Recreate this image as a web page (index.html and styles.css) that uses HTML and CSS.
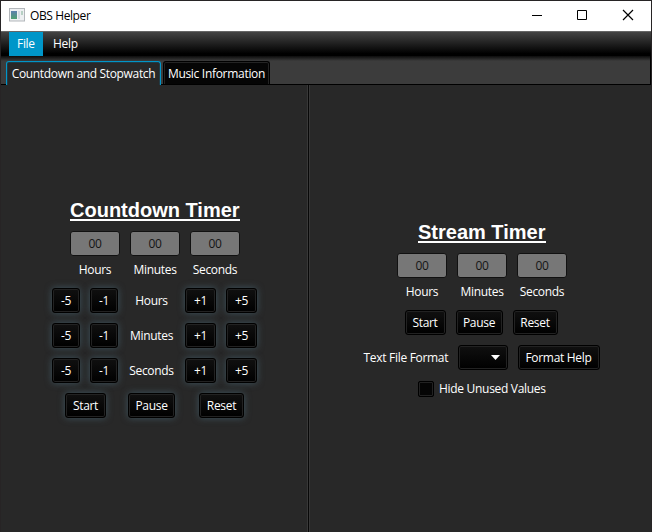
FILE: index.html
```html
<!DOCTYPE html>
<html lang="en">
<head>
<meta charset="utf-8">
<title>OBS Helper</title>
<link rel="stylesheet" href="styles.css">
</head>
<body>
<div class="window">
  <header class="titlebar">
    <svg class="app-icon" width="16" height="14" viewBox="0 0 16 14">
      <defs><linearGradient id="pane" x1="0" y1="0" x2="0" y2="1"><stop offset="0" stop-color="#5d7fae"/><stop offset="1" stop-color="#4fa070"/></linearGradient></defs>
      <rect x=".5" y=".5" width="15" height="12.5" fill="#eef0f2" stroke="#b3b7bb"/>
      <rect x="2" y="3" width="6" height="8" fill="url(#pane)"/>
      <rect x="9" y="3" width="2" height="8" fill="#d4dbe2"/>
      <rect x="12" y="3" width="2" height="4" fill="#b7d0c4"/>
    </svg>
    <h1 class="caption">OBS Helper</h1>
    <svg class="controls" width="138" height="30" viewBox="0 0 138 30" fill="none" stroke="#000">
      <path d="M19 14.5H29M64.5 9.5h9v9h-9z"/><path stroke-width="1.2" d="M110 9l10 10M120 9l-10 10"/>
    </svg>
  </header>
  <nav class="menubar"><span class="menu active">File</span><span class="menu">Help</span></nav>
  <div class="tabs"><span class="tab selected">Countdown and Stopwatch</span><span class="tab music">Music Information</span></div>
  <main class="split">
    <section class="pane countdown">
      <h2>Countdown Timer</h2>
      <div class="fields"><span class="field">00</span><span class="field">00</span><span class="field">00</span></div>
      <div class="labels"><span>Hours</span><span>Minutes</span><span>Seconds</span></div>
      <div class="adjust"><button>-5</button><button>-1</button><span>Hours</span><button>+1</button><button>+5</button></div>
      <div class="adjust"><button>-5</button><button>-1</button><span>Minutes</span><button>+1</button><button>+5</button></div>
      <div class="adjust"><button>-5</button><button>-1</button><span>Seconds</span><button>+1</button><button>+5</button></div>
      <div class="actions"><button class="start">Start</button><button class="pause">Pause</button><button class="reset">Reset</button></div>
    </section>
    <div class="divider"></div>
    <section class="pane stream">
      <h2>Stream Timer</h2>
      <div class="fields"><span class="field">00</span><span class="field">00</span><span class="field">00</span></div>
      <div class="labels"><span>Hours</span><span>Minutes</span><span>Seconds</span></div>
      <div class="actions"><button class="start">Start</button><button class="pause">Pause</button><button class="reset">Reset</button></div>
      <div class="format"><span class="format-label">Text File Format</span><button class="combo"><svg width="9" height="5" viewBox="0 0 9 5"><path d="M0 0h9L4.5 5z" fill="#fff"/></svg></button><button class="help">Format Help</button></div>
      <label class="hide"><span class="box"></span><span class="hide-label">Hide Unused Values</span></label>
    </section>
  </main>
</div>
</body>
</html>
```
FILE: styles.css
```css
* { box-sizing: border-box; }
body { margin: 0; background: #282828; }
.window {
  width: 652px;
  height: 532px;
  display: flex;
  flex-direction: column;
  border: 1px solid #272425;
  border-width: 1px 1px 0;
  background: #282828;
  color: #fff;
  font: 12px/16px "Open Sans", "Noto Sans", sans-serif;
  letter-spacing: -0.3px;
  white-space: nowrap;
  overflow: hidden;
}
.titlebar { height: 30px; flex: none; display: flex; align-items: center; background: #fff; color: #000; padding-left: 8px; }
.app-icon { margin-top: -2px; }
.caption { margin: 0 auto 0 5px; font: inherit; letter-spacing: -0.4px; }
.menubar {
  height: 25px;
  flex: none;
  display: flex;
  padding-left: 8px;
  border-top: 1px solid #666;
  background: linear-gradient(#444, #000 90%);
}
.menu { height: 24px; padding: 4px 8px; }
.menu.active { background: #0096c9; width: 34px; }
.menu + .menu { padding-left: 10px; }
.tabs {
  height: 29px;
  flex: none;
  display: flex;
  align-items: flex-end;
  padding-left: 5px;
  gap: 2px;
  border: solid #000;
  border-width: 0 1px 1px 0;
  background: linear-gradient(#0c0c0c, #3c3c3c 5px);
}
.tab {
  height: 23px;
  padding: 4px 0 0;
  text-align: center;
  border: 1px solid #000;
  border-bottom: 0;
  border-radius: 3px 3px 0 0;
}
.tab.selected { width: 155px; height: 24px; margin-bottom: -1px; letter-spacing: -0.34px; border-color: #0096c9; background: #282828; box-shadow: inset 0 1px #213b46, inset 1px 0 #213b46, inset -1px 0 #213b46; }
.tab.music { width: 107px; background: #050505; box-shadow: inset 0 1px #242424, inset 1px 0 #242424, inset -1px 0 #242424; }
.split { flex: 1; display: flex; }
.pane { display: flex; flex-direction: column; align-items: center; }
.countdown { width: 306px; padding-top: 114px; }
.stream { flex: 1; padding: 136px 0 0 1px; }
.divider { width: 3px; background: #080808; border: solid #383838; border-width: 0 1px; }
h2 {
  margin: 0;
  height: 22px;
  border-bottom: 2px solid #fff;
  font: bold 20px/23px "Liberation Sans", Arial, sans-serif;
  letter-spacing: 0;
}
.countdown h2 { width: 170px; }
.stream h2 { width: 128px; }
.fields { display: flex; gap: 10px; margin-top: 10px; }
.field {
  width: 50px;
  height: 25px;
  padding-top: 4px;
  border: 1px solid #111;
  border-radius: 3px;
  background: #777;
  color: #151515;
  text-align: center;
}
h2, .fields, .labels, .hide { margin-left: 2px; }
.labels { display: grid; grid-template-columns: repeat(3, 60px); height: 16px; margin-top: 6px; text-align: center; }
button {
  height: 25px;
  padding: 0;
  border: 1px solid #000;
  border-radius: 3px;
  background: linear-gradient(#101010, #000);
  box-shadow: inset 0 0 0 1px #222;
  color: #fff;
  font: inherit;
  letter-spacing: inherit;
}
.countdown button { box-shadow: inset 0 0 0 1px #222, 0 0 7px #3e545e; }
.adjust {
  display: grid;
  grid-template-columns: 28px 28px 47px 31px 31px;
  column-gap: 10px;
  align-items: center;
  text-align: center;
  margin: 0 0 10px 1px;
}
.labels + .adjust { margin-top: 10px; }
.actions { display: flex; }
.countdown .actions { margin-left: 1px; }
.start { width: 41px; }
.pause { width: 47px; }
.reset { width: 45px; }
.countdown .pause { margin: 0 24px 0 22px; }
.stream .actions { gap: 10px; margin-top: 10px; }
.format { display: flex; align-items: center; margin-top: 10px; }
.format-label { width: 95px; padding-left: 1px; }
.combo { width: 50px; margin-right: 10px; padding-right: 7px; display: flex; align-items: center; justify-content: flex-end; }
.help { width: 82px; }
.hide { display: flex; align-items: center; height: 16px; margin-top: 11px; }
.box { width: 16px; height: 16px; margin-right: 5px; background: #050505; border: 1px solid #000; border-radius: 2px; box-shadow: inset 0 0 0 1px #222; }
.hide-label { width: 107px; }
```
